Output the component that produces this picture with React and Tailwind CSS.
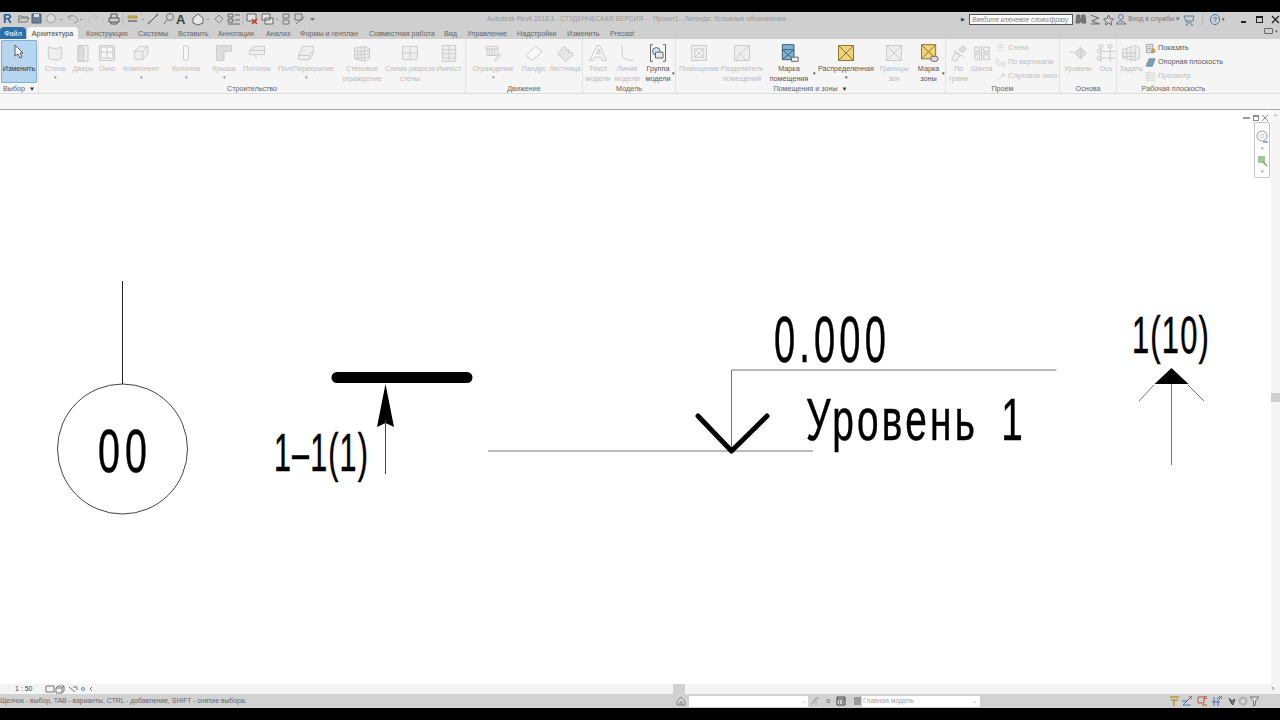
import React from 'react';

const FONT = "font-['Liberation_Sans',sans-serif]";

const Ico = ({ className = 'w-[20px] h-[20px]', dim = true, children, vb = '0 0 24 24' }) => (
    <svg viewBox={vb} className={className} fill={dim ? '#eeeeee' : 'none'} stroke={dim ? '#cccccc' : '#666666'} strokeWidth="1.2" strokeLinejoin="round">
        {children}
    </svg>
);

const I = {
    wall: <path d="M4 5c5 2 11 2 16 0v13c-2 2-6 3-9 2-3 0-6-1-7-2z" />,
    door: <><path d="M6 3h12v19H6z" /><path d="M6 3l7 3v15l-7 1z" fill="#dddddd" /></>,
    window: <><path d="M3 3h18v18H3z" /><path d="M5 5h14v13H5zM12 5v13M5 11h14" fill="#f8f8f8" /></>,
    component: <><path d="M4 10l6-6h10v10l-6 6H4z" /><path d="M4 10h10v10M14 10l6-6" /></>,
    column: <path d="M9 4q3-2 6 0v16q-3 2-6 0z" fill="#f7f7f7" />,
    roof: <path d="M3 3h18v7h-9v11H3z" fill="#dddddd" />,
    ceiling: <><path d="M3 9l5-5h13v10H3z" /><path d="M3 14v-5h18M8 14l4 4" /></>,
    floor: <><path d="M3 15l5-11h13v8l-5 8H3z" /><path d="M3 15h13v5M16 15l5-6" /></>,
    curtain: <><path d="M3 6l12-2 6 3v12l-6 3-12-3z" /><path d="M7 5v15M11 5v16M15 4v18M3 10h12M3 14h12M3 18h12M15 10l6-2M15 14l6-2M15 18l6-2" /></>,
    section: <><path d="M3 4h18v16H3z" /><path d="M12 4v16M3 12h18" /></>,
    mullion: <><path d="M4 3h16v19H4z" /><path d="M4 8h16M4 13h16M4 18h16M12 3v19" /></>,
    railing: <><path d="M3 4h15v3H3zM5 7v8h13V7M8 7v8M11 7v8M14 7v8" /><path d="M14 20l6-7 2 2-6 6z" /></>,
    ramp: <path d="M2 15L14 4l8 6-12 11z" fill="#f8f8f8" />,
    stairs: <path d="M3 13l8-9 3 2-1 3 4-1-1 4 4-1 2 3-9 8z" fill="#e6e6e6" />,
    text3d: <><path d="M2 21L11 3h3l8 18h-5l-1-4H8l-2 4z" fill="#f7f7f7" /><path d="M10 13h5l-2-6z" /></>,
    modelLine: <path d="M6 2v11q0 8 14 8" fill="none" />,
    room: <><path d="M3 3h18v18H3z" /><path d="M7 7h10v10H7zM7 17l10-10M7 7l10 10" fill="#f5f5f5" /></>,
    roomSep: <><path d="M3 3h18v18H3z" /><path d="M5 21l4-8 12-10M9 13l8 8" /></>,
    zoneB: <><path d="M3 3h18v18H3z" fill="#eeeeee" /><path d="M3 3l18 18M21 3L3 21" /></>,
    byFace: <><path d="M3 20l5-9 5 4-4 7z" /><path d="M12 8l5-5 4 4-5 5z" fill="#dddddd" /><path d="M6 9l12 8" /></>,
    shaft: <><path d="M3 5h6v5H3zM14 5h7v5h-7zM3 14h6v6H3zM14 14h7v6h-7z" /><path d="M11.5 2v20M2 12h20" /></>,
    level: <><path d="M2 11h5" /><path d="M8 12l7-7 7 7-7 7z" fill="#dddddd" /><path d="M15 5v14" /></>,
    grid: <><circle cx="6" cy="4" r="2.5" /><circle cx="17" cy="4" r="2.5" /><circle cx="4" cy="10" r="2.5" /><circle cx="4" cy="18" r="2.5" /><path d="M6 7v16M17 7v16M7 10h16M7 18h16" /></>,
    set: <path d="M2 8l14-5 6 2v13l-5 3-15-3zM7 6v15M12 5v17M17 4v17M2 12h15M2 16h15" />,
};

const Tool = ({ w, icon, lines, caret, sideCaret, dim = true }) => (
    <div className={`relative flex flex-col items-center pt-[3px] ${w}`}>
        <div className="h-[22px] flex items-center justify-center">{icon}</div>
        <div className={`text-[7.2px] leading-[10px] text-center whitespace-nowrap ${dim ? 'text-[#bcbcbc]' : 'text-[#555555]'}`}>
            {lines.map((l) => <div key={l}>{l}</div>)}
        </div>
        {caret && <div className={`text-[5px] leading-[6px] ${dim ? 'text-[#888888]' : 'text-[#444444]'}`}>▾</div>}
        {sideCaret && <span className="absolute right-0 top-[31px] text-[5px] leading-[6px] text-[#444444]">▾</span>}
    </div>
);

const Panel = ({ w, title, caret, children, last }) => (
    <div className={`flex flex-col h-full ${w} ${last ? '' : 'border-r border-[#e2e2e2]'}`}>
        <div className="h-[46px] flex">{children}</div>
        <div className="h-[9px] text-[7.2px] leading-[9px] text-center text-[#666666] whitespace-nowrap">
            {title}{caret && <span className="ml-1 text-[6px] text-[#333333]">▼</span>}
        </div>
    </div>
);

const TABS = [
    ['Архитектура', 'w-[51px] ml-[1px] bg-[#f5f5f5] text-[#444444] rounded-t-sm text-center'],
    ['Конструкция', 'w-[60px] pl-[8px]'],
    ['Системы', 'w-[40px]'],
    ['Вставить', 'w-[40px]'],
    ['Аннотации', 'w-[48px]'],
    ['Анализ', 'w-[34px]'],
    ['Формы и генплан', 'w-[69px]'],
    ['Совместная работа', 'w-[75px]'],
    ['Вид', 'w-[23px]'],
    ['Управление', 'w-[50px]'],
    ['Надстройки', 'w-[50px]'],
    ['Изменить', 'w-[43px]'],
    ['Precast', 'w-[40px]'],
];

const Qat = () => (
    <div className="flex items-center h-full w-[330px] -mt-[2px]">
        <span className="ml-[3px] w-[15px] text-[12px] font-bold text-[#2a5f9e] leading-none">R</span>
        <svg width="310" height="15" viewBox="18 0 310 15" fill="none" strokeWidth="1">
            <path d="M18 11V5h4l1 1h5v1M18 11l2-4h9l-2 4z" stroke="#777777" />
            <path d="M32 3h9v9h-9z" fill="#6b8099" stroke="#4b5d76" /><path d="M34 3h5v3h-5z" fill="#dddddd" />
            <path d="M47 5l4-2 4 2v5l-4 2-4-2z" stroke="#a5a5a5" fill="#dddddd" />
            <path d="M60 8l1 1 1-1z" fill="#555555" />
            <path d="M68 6q6-3 9 1t-3 5M68 6l3-2M68 6l3 3" stroke="#999999" />
            <path d="M80 8l1 1 1-1z" fill="#555555" />
            <path d="M98 6q-6-3-9 1t3 5M98 6l-3-2M98 6l-3 3" stroke="#c4c4c4" />
            <path d="M102 8l1 1 1-1z" fill="#888888" />
            <path d="M109 7h10v4h-10zM111 7V3h6v4M111 11v2h6v-2" stroke="#555555" />
            <path d="M123 1v13" stroke="#bbbbbb" />
            <path d="M128 5h9v2h-9z" fill="#d2b24a" stroke="#a8943e" /><path d="M128 9h9v2h-9z" fill="#888888" />
            <path d="M142 8l1 1 1-1z" fill="#555555" />
            <path d="M149 12l8-8" stroke="#555555" /><path d="M148 13l2-2M156 5l2-2" stroke="#888888" strokeWidth="2" />
            <circle cx="170" cy="6" r="3.5" stroke="#777777" /><path d="M167 9l-3 4" stroke="#777777" />
            <text x="176" y="13" fontSize="13" fontWeight="700" fill="#444444" fontFamily="Liberation Sans">A</text>
            <path d="M193 7l5-4 5 4v5l-5 2-5-2z" stroke="#666666" fill="#e8e8e8" />
            <path d="M207 8l1 1 1-1z" fill="#555555" />
            <path d="M215 8l4-4 4 4-4 4z" stroke="#888888" />
            <path d="M228 3h5v3h-5zM228 8h5v3h-5zM235 4h5M235 9h5M228 13h12" stroke="#666666" />
            <path d="M243 1v13" stroke="#bbbbbb" />
            <path d="M247 3h9v7h-9z" stroke="#666666" fill="#e4e4e4" /><path d="M252 8l5 5M257 8l-5 5" stroke="#cc3322" strokeWidth="1.5" />
            <path d="M262 3h8v6h-8zM265 7h8v6h-8z" stroke="#666666" fill="#e8e8e8" />
            <path d="M276 8l1 1 1-1z" fill="#555555" />
            <path d="M283 3h6v4h-6zM283 9h6v4h-6z" stroke="#777777" />
            <path d="M295 3h7v6h-7zM296 13l8-7" stroke="#777777" />
            <path d="M310 7h5l-2.500 3z" fill="#777777" />
        </svg>
    </div>
);

const Stack = ({ icon, label, dim = true }) => (
    <div className={`flex items-center h-[14px] gap-[2px] text-[7.2px] whitespace-nowrap ${dim ? 'text-[#bcbcbc]' : 'text-[#555555]'}`}>
        {icon}{label}
    </div>
);

const Drawing = () => (
    <svg viewBox="0 110 1280 574" className="absolute inset-0 w-full h-full" fontFamily="Liberation Sans" fill="none">
        <circle cx="122.500" cy="449" r="65" stroke="#444444" />
        <path d="M122.500 281v103" stroke="#222222" />
        <g fill="#000000" stroke="#000000" strokeWidth=".5">
            <text x="98" y="472" fontSize="62" letterSpacing="8" textLength="54" lengthAdjust="spacingAndGlyphs">00</text>
            <text x="274" y="471" fontSize="54" letterSpacing="2" textLength="95" lengthAdjust="spacingAndGlyphs">1–1(1)</text>
            <text x="774" y="362" fontSize="64" letterSpacing="7" textLength="116" lengthAdjust="spacingAndGlyphs">0.000</text>
            <text x="806" y="440" fontSize="60" letterSpacing="5" wordSpacing="14" textLength="220" lengthAdjust="spacingAndGlyphs">Уровень 1</text>
            <text x="1132" y="353" fontSize="52" letterSpacing="2" textLength="78" lengthAdjust="spacingAndGlyphs">1(10)</text>
        </g>

        <path d="M337 377.500h130" stroke="#000000" strokeWidth="11" strokeLinecap="round" />
        <path d="M385.500 384l8.500 43-8.500-4-8.500 4z" fill="#000000" />
        <path d="M385.500 420v54" stroke="#444444" />

        <path d="M488 451h325M731.500 451v-81h325" stroke="#777777" />
        <path d="M698 416l33.500 35 35.500-35" stroke="#000000" strokeWidth="5" strokeLinecap="round" strokeLinejoin="round" />

        <path d="M1171.500 368l17 16h-34z" fill="#000000" />
        <path d="M1154 385l-15 16M1188 385l16 16M1171.500 384v81" stroke="#777777" />
    </svg>
);

const App = () => (
    <div className={`w-[1280px] h-[720px] overflow-hidden flex flex-col bg-black ${FONT}`}>
        <div className="h-[12px] bg-black" />

        {/* title bar */}
        <div className="h-[15px] bg-[#cfcfcf] flex items-center">
            <Qat />
            <div className="ml-[159px] w-[488px] text-[6.7px] text-[#9a9a9a] whitespace-nowrap">
                Autodesk Revit 2018.3 - СТУДЕНЧЕСКАЯ ВЕРСИЯ -&nbsp;&nbsp;&nbsp;Проект1 - Легенда: Условные обозначения
            </div>
            <span className="text-[5px] text-[#333333] -ml-[8px] w-[8px]">▶</span>
            <div className="w-[105px] h-[11px] bg-white border border-[#555555] text-[6.4px] leading-[9px] pl-[2px] italic text-[#777777] whitespace-nowrap overflow-hidden">
                Введите ключевое слово/фразу
            </div>
            <svg width="42" height="13" viewBox="0 0 42 13" fill="none" stroke="#666666">
                <path d="M4 2h3v4h2V2h3l1 8H9V8H7v2H3z" fill="#777777" />
                <path d="M18 2l8 3-7 3 8 3H18" />
                <path d="M36 2l1.500 3.500 3.500.5-2.500 2.500.5 3.500-3-2-3 2 .5-3.500L31 6l3.500-.5z" />
            </svg>
            <svg width="12" height="13" viewBox="0 0 12 13" className="ml-[1px]" fill="none" stroke="#667799">
                <circle cx="6" cy="4" r="2.500" /><path d="M1 11q5-6 10 0z" />
            </svg>
            <span className="ml-[1px] w-[54px] text-[6.7px] text-[#777777] whitespace-nowrap">Вход в службы ▾</span>
            <svg width="12" height="12" viewBox="0 0 12 12" className="ml-[1px]" fill="none" stroke="#5f8099">
                <path d="M1 2h10l-1 5H3zM3 7l1 2h5" /><circle cx="4" cy="11" r=".6" /><circle cx="9" cy="11" r=".6" />
            </svg>
            <div className="ml-[7px] w-[1px] h-[11px] bg-[#b5b5b5]" />
            <div className="ml-[7px] w-[11px] h-[11px] rounded-full border border-[#4f7eb0] text-[8px] leading-[9px] text-center text-[#4f7eb0] font-bold">?</div>
            <span className="ml-[2px] w-[19px] text-[5px] text-[#444444]">▾</span>
            <div className="w-[5px] h-[1.5px] mt-[5px] bg-[#222222]" />
            <div className="ml-[10px] w-[7px] h-[7px] border border-[#222222] border-t-2" />
            <svg width="9" height="9" viewBox="0 0 9 9" className="ml-[8px]" stroke="#222222" strokeWidth="1.300">
                <path d="M1 1l7 7M8 1L1 8" />
            </svg>
        </div>

        {/* tabs */}
        <div className="h-[12px] bg-[#cfcfcf] flex text-[7.2px] leading-[13px] text-[#666666] whitespace-nowrap relative">
            <div className="w-[26px] bg-[#2c6ea6] text-white text-center rounded-t-sm">Файл</div>
            {TABS.map(([t, c]) => <div key={t} className={c}>{t}</div>)}
            <div className="absolute right-[2px] top-[1px] flex items-center gap-[2px]">
                <div className="w-[9px] h-[6px] border border-[#666666] rounded-[1px]" />
                <span className="text-[5px] leading-[6px] text-[#555555]">▾</span>
            </div>
        </div>

        {/* ribbon */}
        <div className="h-[55px] bg-[#f5f5f5] border-b border-[#dcdcdc] flex">
            <Panel w="w-[39px]" title="Выбор" caret>
                <div className="w-[36px] ml-[1px] mt-[1px] h-[43px] bg-[#b5d5f0] border border-[#7fb0d8] flex flex-col items-center rounded-[1px]">
                    <svg width="12" height="16" viewBox="0 0 12 16" className="mt-[3px]" fill="#ffffff" stroke="#555555">
                        <path d="M2 1v11l3-2 2 4 2-1-2-4h3z" />
                    </svg>
                    <span className="mt-[4px] text-[7.2px] text-[#333333]">Изменить</span>
                </div>
            </Panel>
            <Panel w="w-[427px]" title="Строительство">
                <Tool w="w-[32px]" icon={<Ico>{I.wall}</Ico>} lines={['Стена']} caret />
                <Tool w="w-[24px]" icon={<Ico>{I.door}</Ico>} lines={['Дверь']} />
                <Tool w="w-[24px]" icon={<Ico>{I.window}</Ico>} lines={['Окно']} />
                <Tool w="w-[44px]" icon={<Ico>{I.component}</Ico>} lines={['Компонент']} caret />
                <Tool w="w-[46px]" icon={<Ico>{I.column}</Ico>} lines={['Колонна']} caret />
                <Tool w="w-[30px]" icon={<Ico>{I.roof}</Ico>} lines={['Крыша']} caret />
                <Tool w="w-[36px]" icon={<Ico>{I.ceiling}</Ico>} lines={['Потолок']} />
                <Tool w="w-[62px]" icon={<Ico>{I.floor}</Ico>} lines={['Пол/Перекрытие']} caret />
                <Tool w="w-[50px]" icon={<Ico>{I.curtain}</Ico>} lines={['Стеновое', 'ограждение']} />
                <Tool w="w-[46px]" icon={<Ico>{I.section}</Ico>} lines={['Схема разреза', 'стены']} />
                <Tool w="w-[32px]" icon={<Ico>{I.mullion}</Ico>} lines={['Импост']} />
            </Panel>
            <Panel w="w-[117px]" title="Движение">
                <Tool w="w-[54px]" icon={<Ico>{I.railing}</Ico>} lines={['Ограждение']} caret />
                <Tool w="w-[28px]" icon={<Ico>{I.ramp}</Ico>} lines={['Пандус']} />
                <Tool w="w-[34px]" icon={<Ico>{I.stairs}</Ico>} lines={['Лестница']} />
            </Panel>
            <Panel w="w-[93px]" title="Модель">
                <Tool w="w-[30px]" icon={<Ico>{I.text3d}</Ico>} lines={['Текст', 'модели']} />
                <Tool w="w-[28px]" icon={<Ico>{I.modelLine}</Ico>} lines={['Линия', 'модели']} />
                <Tool w="w-[34px]" dim={false} sideCaret icon={
                    <Ico dim={false}><path d="M6 2H3v20h3M18 2h3v20h-3" /><circle cx="10" cy="10" r="4.500" fill="#d9e4ee" /><path d="M9 11h9v7H9z" fill="#e8e8e8" /></Ico>
                } lines={['Группа', 'модели']} />
            </Panel>
            <Panel w="w-[270px]" title="Помещения и зоны" caret>
                <Tool w="w-[46px]" icon={<Ico>{I.room}</Ico>} lines={['Помещение']} />
                <Tool w="w-[40px]" icon={<Ico>{I.roomSep}</Ico>} lines={['Разделитель', 'помещений']} />
                <Tool w="w-[54px]" dim={false} sideCaret icon={
                    <Ico dim={false}><path d="M4 2h14v18H4z" fill="#7fb2d6" stroke="#3e5f7a" /><path d="M4 8l14 12M18 8L4 20M4 8h14" stroke="#3e5f7a" /><path d="M15 17h8v5h-8z" fill="#eeeeee" /></Ico>
                } lines={['Марка', 'помещения']} />
                <Tool w="w-[60px]" dim={false} icon={
                    <Ico dim={false}><path d="M3 3h18v18H3z" fill="#f2d279" stroke="#8a7a30" /><path d="M3 3l18 18M21 3L3 21" stroke="#8a7a30" /></Ico>
                } lines={['Распределенная']} caret />
                <Tool w="w-[36px]" icon={<Ico>{I.zoneB}</Ico>} lines={['Границы', 'зон']} />
                <Tool w="w-[33px]" dim={false} sideCaret icon={
                    <Ico dim={false}><path d="M3 2h17v17H3z" fill="#f2d279" stroke="#8a7a30" /><path d="M3 2l17 17M20 2L3 19" stroke="#8a7a30" /><rect x="14" y="16" width="9" height="6" rx="3" fill="#dddddd" /></Ico>
                } lines={['Марка', 'зоны']} />
            </Panel>
            <Panel w="w-[114px]" title="Проем">
                <Tool w="w-[25px]" icon={<Ico>{I.byFace}</Ico>} lines={['По', 'грани']} />
                <Tool w="w-[21px]" icon={<Ico>{I.shaft}</Ico>} lines={['Шахта']} />
                <div className="flex flex-col pl-[3px] pt-[2px]">
                    <Stack label="Стена" icon={<Ico className="w-[11px] h-[11px]"><path d="M4 4h16M4 10h16M4 16h16M12 4v6" /></Ico>} />
                    <Stack label="По вертикали" icon={<Ico className="w-[11px] h-[11px]"><path d="M3 4l8 6v10l-8-6zM15 12h6v8h-6z" /></Ico>} />
                    <Stack label="Слуховое окно" icon={<Ico className="w-[11px] h-[11px]"><path d="M3 21l10-10h8M16 6h5v5h-5z" /></Ico>} />
                </div>
            </Panel>
            <Panel w="w-[57px]" title="Основа">
                <Tool w="w-[36px]" icon={<Ico>{I.level}</Ico>} lines={['Уровень']} />
                <Tool w="w-[20px]" icon={<Ico>{I.grid}</Ico>} lines={['Ось']} />
            </Panel>
            <Panel w="w-[113px]" title="Рабочая плоскость" last>
                <Tool w="w-[28px]" icon={<Ico>{I.set}</Ico>} lines={['Задать']} />
                <div className="flex flex-col pt-[2px]">
                    <Stack dim={false} label="Показать" icon={<Ico dim={false} className="w-[11px] h-[11px]"><path d="M3 3h14v18H3z" fill="#eeeeee" /><path d="M6 8h8M6 12h8M6 16h5" /><circle cx="18" cy="17" r="4" fill="#e0b030" /></Ico>} />
                    <Stack dim={false} label="Опорная плоскость" icon={<Ico dim={false} className="w-[11px] h-[11px]"><path d="M3 20L9 4h13l-6 16z" fill="#6fa3cf" stroke="#39648a" /><path d="M2 15l18-9" stroke="#d08a20" /></Ico>} />
                    <Stack label="Просмотр" icon={<Ico className="w-[11px] h-[11px]"><path d="M3 3h18v18H3z" /><path d="M6 8h5v5H6zM14 8h4M14 12h4M6 16h12" /></Ico>} />
                </div>
            </Panel>
        </div>

        {/* options bar */}
        <div className="h-[16px] bg-[#f7f7f7] border-b border-[#a9a9a9]" />

        {/* canvas */}
        <div className="h-[574px] relative bg-white">
            <Drawing />
            <div className="absolute top-0 bottom-0 right-0 w-[9px] bg-[#f5f5f5]">
                <div className="absolute top-[283px] left-0 w-[9px] h-[9px] bg-[#cfcfcf]" />
                <span className="absolute top-[3px] left-[2px] text-[6px] text-[#666666]">⌃</span>
            </div>
            <div className="absolute top-[5px] right-[12px] flex items-center gap-[3px]">
                <div className="w-[7px] h-[1.5px] bg-[#9a9a9a]" />
                <div className="w-[6px] h-[6px] border border-[#8a8a8a] border-t-2" />
                <svg width="6" height="6" viewBox="0 0 6 6" stroke="#8a8a8a"><path d="M0 0l6 6M6 0L0 6" /></svg>
            </div>
            <div className="absolute top-[12px] right-[10px] w-[16px] h-[56px] bg-white border border-[#c4c4c4] rounded-[2px] flex flex-col items-center pt-[7px]">
                <svg width="13" height="14" viewBox="0 0 13 14" fill="none"><circle cx="6" cy="6" r="5" stroke="#bdbdbd" strokeWidth="1.500" /><circle cx="6" cy="6" r="2" stroke="#c9c9c9" /><path d="M7 11h5v2H7z" fill="#8fb3d6" /></svg>
                <span className="mt-[1px] text-[5px] leading-[6px] text-[#999999]">▾</span>
                <svg width="11" height="12" viewBox="0 0 11 12" className="mt-[4px]"><path d="M1 1h7v7H1z" fill="#a6c29a" /><path d="M6 7l4 4" stroke="#888888" strokeWidth="1.300" /></svg>
                <span className="mt-[1px] text-[5px] leading-[6px] text-[#999999]">▾</span>
            </div>
        </div>

        {/* view control bar */}
        <div className="h-[10px] bg-[#f4f4f4] flex items-center relative">
            <span className="ml-[15px] w-[30px] text-[7px] text-[#444444]">1 : 50</span>
            <svg width="52" height="9" viewBox="0 0 52 9" fill="none" stroke="#777777">
                <path d="M1 1h8v6H1zM11 3l2-2h6v5l-2 2h-6zM11 3h6v5M17 3l2-2" />
                <path d="M24 2l6 5M28 2h4v3" />
                <circle cx="38" cy="4" r="1.500" stroke="#5a8fc4" />
                <path d="M47 2l-2 2 2 2" />
            </svg>
            <div className="absolute left-[673px] top-0 w-[12px] h-[10px] bg-[#d2d2d2]" />
            <span className="absolute right-[6px] top-0 text-[7px] leading-[10px] text-[#555555]">›</span>
        </div>

        {/* status bar */}
        <div className="h-[14px] bg-[#d2d2d2] flex items-center text-[6.8px] text-[#666666] relative">
            <span className="w-[675px] whitespace-nowrap">Щелчок - выбор, TAB - варианты, CTRL - добавление, SHIFT - снятие выбора.</span>
            <svg width="14" height="10" viewBox="0 0 14 10" fill="none" stroke="#888888"><path d="M2 9V5l4-4 4 4v4zM5 9V6h2v3" /></svg>
            <div className="w-[119px] h-[11px] bg-white flex items-center justify-end pr-[2px] text-[6px] text-[#aaaaaa]">⌄</div>
            <svg width="16" height="10" viewBox="0 0 16 10" fill="none" stroke="#a0a0a0" className="ml-[1px]"><path d="M2 9l5-7h3M7 2v7" /></svg>
            <span className="text-[6px] text-[#555555] w-[9px]">:0</span>
            <svg width="10" height="10" viewBox="0 0 10 10" className="ml-[2px]" fill="none" stroke="#444444"><path d="M1 1h8v8H1zM1 3h8M3 5h1M6 5h2M3 7h1M6 7h2" /></svg>
            <div className="ml-[8px] w-[7px] h-[8px] bg-[#9a9a9a]" />
            <div className="ml-[1px] w-[118px] h-[11px] bg-white flex items-center justify-between px-[1px] text-[6.8px] text-[#a5a5a5]">
                <span>Главная модель</span><span className="text-[6px] pr-[2px]">⌄</span>
            </div>
            <svg width="98" height="12" viewBox="0 0 98 12" fill="none" className="absolute right-[16px] top-[1px]">
                <path d="M4 2h9M5 5h7M8 5v6" stroke="#b79a2f" strokeWidth="1.500" />
                <path d="M17 10l8-8M16 6h5M17 10h8" stroke="#4a78a8" /><path d="M23 1l3 3M26 1l-3 3" stroke="#c53a2a" />
                <path d="M32 2h6v6h-6zM36 10h5" stroke="#b8583a" /><path d="M38 1l3 3M41 1l-3 3" stroke="#c53a2a" />
                <path d="M48 2v9M52 2v9M46 7h8" stroke="#4a78a8" /><path d="M53 1l3 3M56 1l-3 3" stroke="#c53a2a" />
                <path d="M63 3l3 3 3-2-2 6-2-2z" fill="#777777" stroke="#555555" />
                <circle cx="77" cy="6" r="3.500" stroke="#b0b0b0" strokeWidth="2" />
                <path d="M84 2h9l-3.500 4v4l-2 1V6z" stroke="#777777" fill="#dddddd" />
            </svg>
        </div>

        <div className="flex-1 bg-black" />
    </div>
);

export default App;
